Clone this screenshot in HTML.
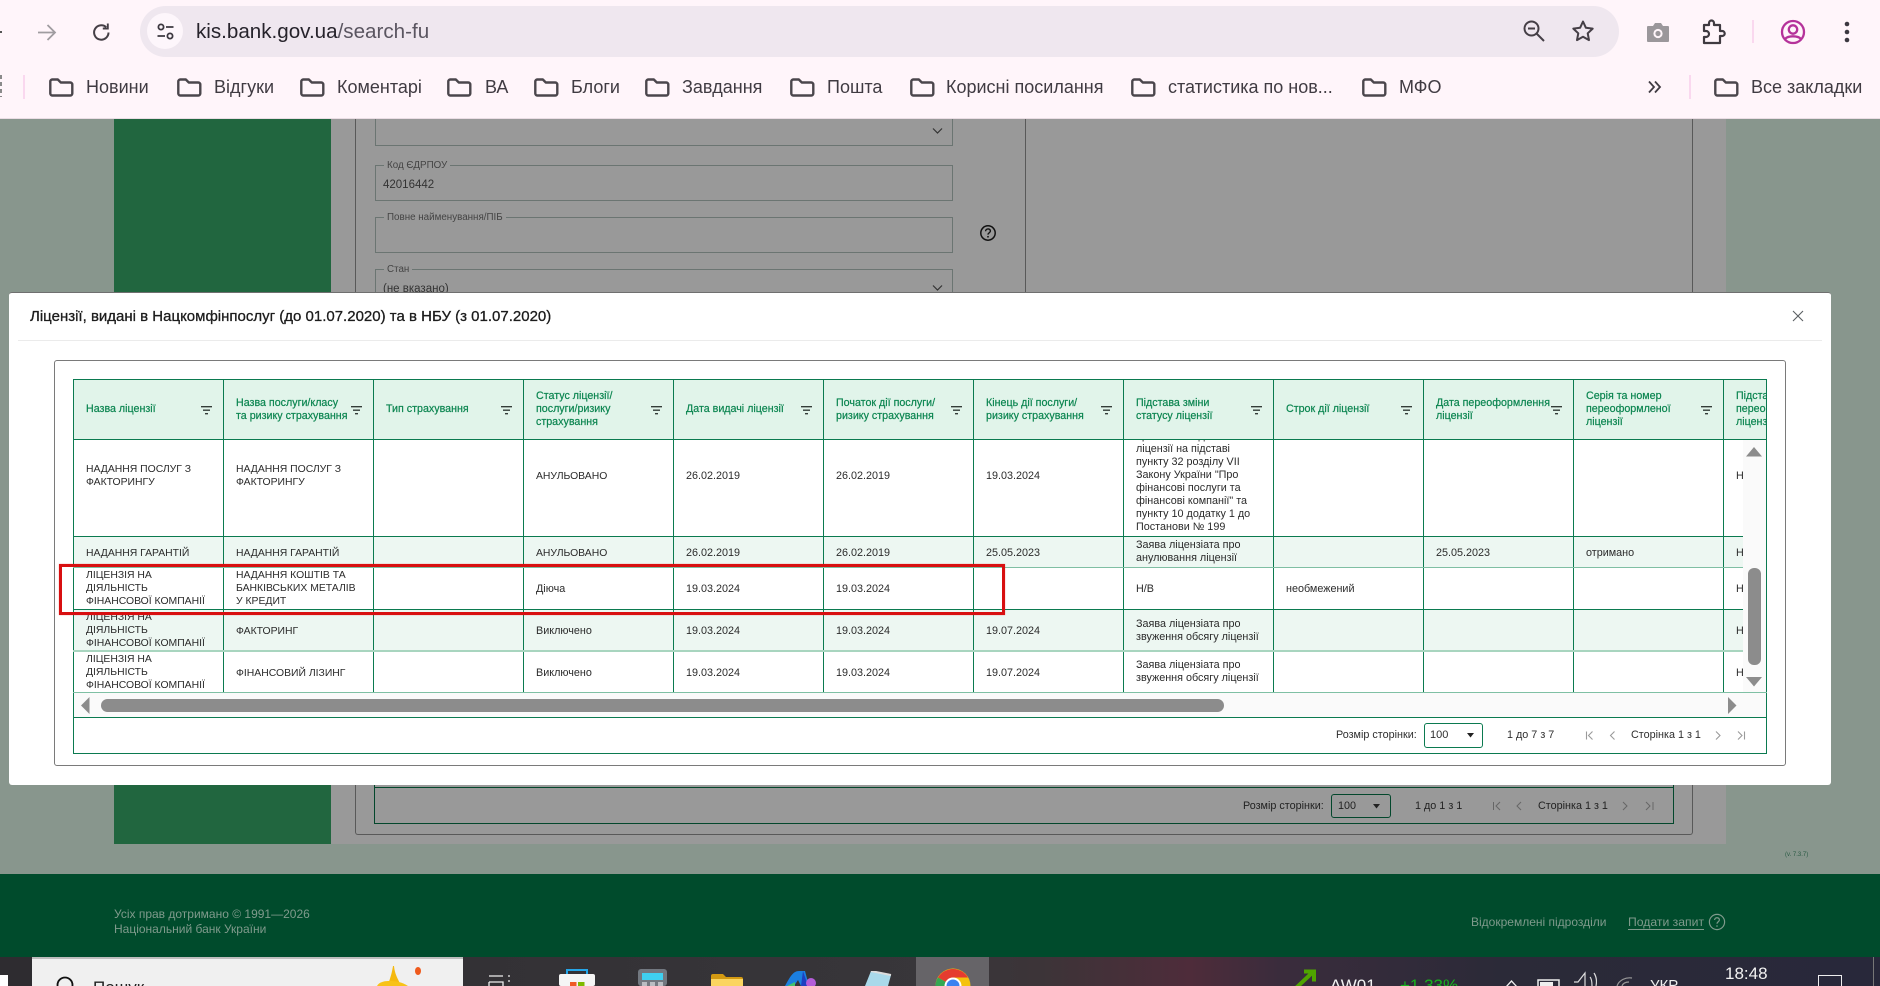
<!DOCTYPE html>
<html lang="uk">
<head>
<meta charset="utf-8">
<title>kis.bank.gov.ua</title>
<style>
html,body{margin:0;padding:0;width:1880px;height:986px;overflow:hidden;background:#88968d}
body{font-family:"Liberation Sans","DejaVu Sans",sans-serif;position:relative}
div,span,svg{position:absolute}
a{color:inherit}
.t{white-space:nowrap}
.bm{white-space:nowrap;font-size:18px;line-height:20px;top:77px;color:#403b42}
.fold{top:77px;width:25px;height:20px}
.layer{left:0;top:0;width:1880px;height:986px}
.c{white-space:nowrap;font-size:10.8px;line-height:13px;color:#2b2b2b}
.k{white-space:nowrap;font-size:10.4px;line-height:13px;color:#2b2b2b}
.h{white-space:nowrap;font-size:10.7px;line-height:13px;color:#0b8550;-webkit-text-stroke:.2px #0b8550}
.v{width:1px;background:#0b7a50}
.hl{height:1px;background:#0b7a50}
.f{width:11px;height:9px;top:406px}
.bg{white-space:nowrap;font-size:10.8px;line-height:13px;color:#2e2e2e}
</style>
</head>
<body>

<!-- page behind overlay -->
<div style="left:0;top:119px;width:1880px;height:755px;background:#88968d"></div>
<div style="left:114px;top:119px;width:217px;height:725px;background:#21663f"></div>
<div style="left:331px;top:119px;width:1395px;height:725px;background:#999"></div>
<div style="left:355px;top:119px;width:1338px;height:716px;border:solid #595959;border-width:0 1px 1px 1px;border-radius:0 0 3px 3px;box-sizing:border-box"></div>
<div style="left:1025px;top:119px;width:1px;height:173px;background:#595959"></div>

<div style="left:375px;top:119px;width:578px;height:27px;border:1px solid #6b7572;border-top:0;box-sizing:border-box"></div>
<svg style="left:932px;top:127px" width="11" height="8" viewBox="0 0 11 8"><path d="M1 1.5l4.5 4.5L10 1.5" fill="none" stroke="#333" stroke-width="1.2"/></svg>

<div style="left:375px;top:165px;width:578px;height:36px;border:1px solid #6b7572;box-sizing:border-box"></div>
<div class="t" style="left:384px;top:160px;padding:0 3px;background:#999;font-size:9.8px;line-height:12px;color:#444">Код ЄДРПОУ</div>
<div class="t" style="left:383px;top:178px;font-size:11.5px;line-height:14px;color:#333">42016442</div>

<div style="left:375px;top:217px;width:578px;height:36px;border:1px solid #6b7572;box-sizing:border-box"></div>
<div class="t" style="left:384px;top:212px;padding:0 3px;background:#999;font-size:9.8px;line-height:12px;color:#444">Повне найменування/ПІБ</div>
<svg style="left:979px;top:224px" width="18" height="18" viewBox="0 0 18 18"><circle cx="9" cy="9" r="7.2" fill="none" stroke="#111" stroke-width="1.5"/><path d="M6.6 7.2c0-3 4.8-3 4.8-.2 0 1.8-2.4 1.8-2.4 3.6" fill="none" stroke="#111" stroke-width="1.4"/><circle cx="9" cy="12.8" r=".9" fill="#111"/></svg>

<div style="left:375px;top:269px;width:578px;height:30px;border:1px solid #6b7572;box-sizing:border-box"></div>
<div class="t" style="left:384px;top:264px;padding:0 3px;background:#999;font-size:9.8px;line-height:12px;color:#444">Стан</div>
<div class="t" style="left:383px;top:282px;font-size:11.5px;line-height:14px;color:#333">(не вказано)</div>
<svg style="left:932px;top:284px" width="11" height="8" viewBox="0 0 11 8"><path d="M1 1.5l4.5 4.5L10 1.5" fill="none" stroke="#333" stroke-width="1.2"/></svg>

<!-- pagination behind modal -->
<div style="left:374px;top:780px;width:1300px;height:44px;border:1px solid #03472c;box-sizing:border-box"></div>
<div class="hl" style="left:374px;top:787px;width:1300px;background:#03472c"></div>
<div class="t" style="left:1243px;top:799px;font-size:10.8px;line-height:14px;color:#222">Розмір сторінки:</div>
<div style="left:1331px;top:794px;width:60px;height:24px;border:1px solid #03472c;border-radius:3px;box-sizing:border-box"></div>
<div class="t" style="left:1338px;top:799px;font-size:10.8px;line-height:14px;color:#222">100</div>
<svg style="left:1373px;top:804px" width="8" height="5"><path d="M0 0h7L3.5 4.5z" fill="#222"/></svg>
<div class="t" style="left:1415px;top:799px;font-size:10.8px;line-height:14px;color:#222">1 до 1 з 1</div>
<svg style="left:1492px;top:800px" width="170" height="12" viewBox="0 0 170 12" fill="none" stroke="#666" stroke-width="1"><path d="M1.5 2v8M8 2L4 6l4 4"/><path d="M29 2l-4 4 4 4"/><path d="M131 2l4 4-4 4"/><path d="M154 2l4 4-4 4M161 2v8"/></svg>
<div class="t" style="left:1538px;top:799px;font-size:10.8px;line-height:14px;color:#222">Сторінка 1 з 1</div>
<div class="t" style="left:1785px;top:851px;font-size:6px;line-height:8px;color:#2a5a44">(v. 7.3.7)</div>

<!-- footer -->
<div style="left:0;top:874px;width:1880px;height:83px;background:#004b2c"></div>
<div class="t" style="left:114px;top:907px;font-size:12px;line-height:14px;color:#7f9a8c">Усіх прав дотримано © 1991—2026</div>
<div class="t" style="left:114px;top:922px;font-size:12px;line-height:14px;color:#7f9a8c">Національний банк України</div>
<div class="t" style="left:1471px;top:915px;font-size:12px;line-height:14px;color:#7f9a8c">Відокремлені підрозділи</div>
<div class="t" style="left:1628px;top:915px;font-size:12.2px;line-height:14px;color:#7f9a8c;border-bottom:1px solid #7f9a8c">Подати запит</div>
<svg style="left:1708px;top:913px" width="18" height="18" viewBox="0 0 18 18"><circle cx="9" cy="9" r="7.6" fill="none" stroke="#7f9a8c" stroke-width="1.2"/><path d="M6.6 7c0-3 4.8-3 4.8-.1 0 1.8-2.4 1.9-2.4 3.8" fill="none" stroke="#7f9a8c" stroke-width="1.2"/><circle cx="9" cy="13" r=".8" fill="#7f9a8c"/></svg>

<!-- chrome -->
<div style="left:0;top:0;width:1880px;height:118px;background:#fff5fa"></div>
<div style="left:0;top:118px;width:1880px;height:1px;background:#eadde4"></div>
<div style="left:0;top:31px;width:2px;height:2px;background:#555"></div>
<svg style="left:36px;top:22px" width="22" height="21" viewBox="0 0 22 21" fill="none" stroke="#a09ca0" stroke-width="1.8"><path d="M2 10.5h17M11.5 3l7.5 7.5-7.5 7.5"/></svg>
<svg style="left:91px;top:22px" width="21" height="21" viewBox="0 0 21 21" fill="none" stroke="#453f46" stroke-width="2"><path d="M17.5 10.5a7.2 7.2 0 1 1-2.3-5.3"/><path d="M16.8 1.5v5h-5" stroke-width="1.9"/></svg>
<div style="left:140px;top:6px;width:1479px;height:51px;border-radius:26px;background:#efe7ef"></div>
<div style="left:147px;top:13px;width:36px;height:36px;border-radius:18px;background:#fdf6fb"></div>
<svg style="left:156px;top:22px" width="19" height="19" viewBox="0 0 19 19" fill="none" stroke="#3c3840" stroke-width="1.8"><circle cx="5" cy="5" r="2.6"/><path d="M10 5h7.5M1.5 14H9"/><circle cx="14" cy="14" r="2.6"/></svg>
<div class="t" style="left:196px;top:20px;font-size:20.6px;line-height:24px;color:#26232b">kis.bank.gov.ua<span style="position:static;color:#5a5560">/search-fu</span></div>
<svg style="left:1522px;top:19px" width="24" height="24" viewBox="0 0 24 24" fill="none" stroke="#453f46" stroke-width="2"><circle cx="9.5" cy="9.5" r="7"/><path d="M6 9.5h7M14.5 14.5L22 22"/></svg>
<svg style="left:1571px;top:19px" width="24" height="24" viewBox="0 0 24 24" fill="none" stroke="#453f46" stroke-width="2" stroke-linejoin="round"><path d="M12 2.5l2.9 6.3 6.8.8-5 4.7 1.3 6.8-6-3.4-6 3.4 1.3-6.8-5-4.7 6.8-.8z"/></svg>
<svg style="left:1646px;top:21px" width="24" height="22" viewBox="0 0 24 22"><path d="M2 5h5l2-3h6l2 3h5a1 1 0 0 1 1 1v14a1 1 0 0 1-1 1H2a1 1 0 0 1-1-1V6a1 1 0 0 1 1-1z" fill="#9b979b"/><circle cx="12" cy="12.5" r="4.6" fill="#fff5fa"/><circle cx="12" cy="12.5" r="2.6" fill="#9b979b"/></svg>
<svg style="left:1701px;top:19px" width="25" height="26" viewBox="0 0 25 26" fill="none" stroke="#3f3a40" stroke-width="2.2" stroke-linejoin="round"><path d="M3 6h5V4a2.5 2.5 0 0 1 5 0v2h6v6h2.200a2.500 2.500 0 0 1 0 5H19v7H3v-6h2a2.800 2.800 0 0 0 0-6H3z"/></svg>
<div style="left:1752px;top:20px;width:2px;height:23px;background:#fad8ef"></div>
<svg style="left:1780px;top:19px" width="26" height="26" viewBox="0 0 26 26" fill="none" stroke="#b5329a" stroke-width="2.300"><circle cx="13" cy="13" r="11"/><circle cx="13" cy="10.500" r="4.200"/><path d="M5 20c3-3.600 13-3.600 16 0"/></svg>
<svg style="left:1843px;top:21px" width="8" height="22" viewBox="0 0 8 22" fill="#3c3840"><circle cx="4" cy="3" r="2.300"/><circle cx="4" cy="11" r="2.300"/><circle cx="4" cy="19" r="2.300"/></svg>

<div style="left:0;top:75px;width:2px;height:22px;background:repeating-linear-gradient(#8a8a8a 0 4px,transparent 4px 7px)"></div>
<div style="left:23px;top:75px;width:2px;height:24px;background:#fad8ef"></div>

<svg style="width:0;height:0"><defs><g id="folder"><path d="M1.300 4.500a2 2 0 0 1 2-2h5.500l3 3h9.500a2 2 0 0 1 2 2v9a2 2 0 0 1-2 2h-18a2 2 0 0 1-2-2z" fill="none" stroke="#4b464c" stroke-width="2.400" stroke-linejoin="round"/></g></defs></svg>
<svg class="fold" style="left:49px" viewBox="0 0 25 20"><use href="#folder"/></svg>
<div class="bm" style="left:86px">Новини</div>
<svg class="fold" style="left:177px" viewBox="0 0 25 20"><use href="#folder"/></svg>
<div class="bm" style="left:214px">Відгуки</div>
<svg class="fold" style="left:300px" viewBox="0 0 25 20"><use href="#folder"/></svg>
<div class="bm" style="left:337px">Коментарі</div>
<svg class="fold" style="left:447px" viewBox="0 0 25 20"><use href="#folder"/></svg>
<div class="bm" style="left:485px">ВА</div>
<svg class="fold" style="left:534px" viewBox="0 0 25 20"><use href="#folder"/></svg>
<div class="bm" style="left:571px">Блоги</div>
<svg class="fold" style="left:645px" viewBox="0 0 25 20"><use href="#folder"/></svg>
<div class="bm" style="left:682px">Завдання</div>
<svg class="fold" style="left:790px" viewBox="0 0 25 20"><use href="#folder"/></svg>
<div class="bm" style="left:827px">Пошта</div>
<svg class="fold" style="left:910px" viewBox="0 0 25 20"><use href="#folder"/></svg>
<div class="bm" style="left:946px">Корисні посилання</div>
<svg class="fold" style="left:1131px" viewBox="0 0 25 20"><use href="#folder"/></svg>
<div class="bm" style="left:1168px">статистика по нов...</div>
<svg class="fold" style="left:1362px" viewBox="0 0 25 20"><use href="#folder"/></svg>
<div class="bm" style="left:1399px">МФО</div>
<svg style="left:1647px;top:80px" width="15" height="14" viewBox="0 0 15 14" fill="none" stroke="#403b42" stroke-width="1.800"><path d="M2 1.500L7 7l-5 5.500M8 1.500L13 7l-5 5.500"/></svg>
<div style="left:1689px;top:75px;width:2px;height:24px;background:#fad8ef"></div>
<svg class="fold" style="left:1714px" viewBox="0 0 25 20"><use href="#folder"/></svg>
<div class="bm" style="left:1751px">Все закладки</div>

<!-- modal -->
<div style="left:9px;top:292px;width:1822px;height:493px;background:#fff;border-top:1px solid #6f6f6f;border-radius:3px;box-sizing:border-box"></div>
<div class="t" style="left:30px;top:308px;font-size:15px;line-height:18px;color:#1c1c1c;-webkit-text-stroke:.3px #1c1c1c">Ліцензії, видані в Нацкомфінпослуг (до 01.07.2020) та в НБУ (з 01.07.2020)</div>
<svg style="left:1792px;top:310px" width="12" height="12" viewBox="0 0 12 12"><path d="M1 1l10 10M11 1L1 11" stroke="#5a5f62" stroke-width="1.100"/></svg>
<div style="left:18px;top:340px;width:1804px;height:1px;background:#ebebeb"></div>
<div style="left:54px;top:360px;width:1732px;height:406px;border:1px solid #7a7a7a;border-radius:3px;box-sizing:border-box;background:#fff"></div>

<!-- table frame and header -->
<div style="left:73px;top:379px;width:1694px;height:60px;background:#e1f4ea"></div>
<div style="left:74px;top:440px;width:1669px;height:252px;background:#fff"></div>
<div style="left:74px;top:537px;width:1669px;height:30px;background:#edf7f2"></div>
<div style="left:74px;top:610px;width:1669px;height:41px;background:#edf7f2"></div>

<div style="left:73px;top:379px;width:1694px;height:375px;border:1px solid #0b7a50;box-sizing:border-box"></div>
<div class="hl" style="left:73px;top:439px;width:1694px"></div>

<div class="v" style="left:223px;top:379px;height:313px"></div>
<div class="v" style="left:373px;top:379px;height:313px"></div>
<div class="v" style="left:523px;top:379px;height:313px"></div>
<div class="v" style="left:673px;top:379px;height:313px"></div>
<div class="v" style="left:823px;top:379px;height:313px"></div>
<div class="v" style="left:973px;top:379px;height:313px"></div>
<div class="v" style="left:1123px;top:379px;height:313px"></div>
<div class="v" style="left:1273px;top:379px;height:313px"></div>
<div class="v" style="left:1423px;top:379px;height:313px"></div>
<div class="v" style="left:1573px;top:379px;height:313px"></div>
<div class="v" style="left:1723px;top:379px;height:313px"></div>

<div class="hl" style="left:73px;top:536px;width:1670px"></div>
<div class="hl" style="left:73px;top:567px;width:1670px;background:#7fbfa3"></div>
<div class="hl" style="left:73px;top:609px;width:1670px"></div>
<div style="left:73px;top:650px;width:1670px;height:2px;background:#a8d5bf"></div>
<div class="hl" style="left:73px;top:692px;width:1694px;background:#7fc0a4"></div>
<div class="hl" style="left:73px;top:717px;width:1694px"></div>

<!-- header text -->
<div class="layer" style="clip-path:polygon(74px 380px,1766px 380px,1766px 439px,74px 439px)">
<div class="h" style="left:86px;top:403px">Назва ліцензії</div>
<div class="h" style="left:236px;top:397px">Назва послуги/класу<br>та ризику страхування</div>
<div class="h" style="left:386px;top:403px">Тип страхування</div>
<div class="h" style="left:536px;top:390px">Статус ліцензії/<br>послуги/ризику<br>страхування</div>
<div class="h" style="left:686px;top:403px">Дата видачі ліцензії</div>
<div class="h" style="left:836px;top:397px">Початок дії послуги/<br>ризику страхування</div>
<div class="h" style="left:986px;top:397px">Кінець дії послуги/<br>ризику страхування</div>
<div class="h" style="left:1136px;top:397px">Підстава зміни<br>статусу ліцензії</div>
<div class="h" style="left:1286px;top:403px">Строк дії ліцензії</div>
<div class="h" style="left:1436px;top:397px">Дата переоформлення<br>ліцензії</div>
<div class="h" style="left:1586px;top:390px">Серія та номер<br>переоформленої<br>ліцензії</div>
<div class="h" style="left:1736px;top:390px">Підстава<br>переоформлення<br>ліцензії</div>
</div>

<svg style="width:0;height:0"><defs><g id="flt"><path d="M0 .7h11M2 4.200h7M4 7.700h3" stroke="#333c38" stroke-width="1.300" fill="none"/></g></defs></svg>
<svg class="f" style="left:201px" viewBox="0 0 11 9"><use href="#flt"/></svg>
<svg class="f" style="left:351px" viewBox="0 0 11 9"><use href="#flt"/></svg>
<svg class="f" style="left:501px" viewBox="0 0 11 9"><use href="#flt"/></svg>
<svg class="f" style="left:651px" viewBox="0 0 11 9"><use href="#flt"/></svg>
<svg class="f" style="left:801px" viewBox="0 0 11 9"><use href="#flt"/></svg>
<svg class="f" style="left:951px" viewBox="0 0 11 9"><use href="#flt"/></svg>
<svg class="f" style="left:1101px" viewBox="0 0 11 9"><use href="#flt"/></svg>
<svg class="f" style="left:1251px" viewBox="0 0 11 9"><use href="#flt"/></svg>
<svg class="f" style="left:1401px" viewBox="0 0 11 9"><use href="#flt"/></svg>
<svg class="f" style="left:1551px" viewBox="0 0 11 9"><use href="#flt"/></svg>
<svg class="f" style="left:1701px" viewBox="0 0 11 9"><use href="#flt"/></svg>

<!-- body text -->
<div class="layer" style="clip-path:polygon(74px 440px,1743px 440px,1743px 692px,74px 692px)">
<!-- row 1 -->
<div class="k" style="left:86px;top:463px">НАДАННЯ ПОСЛУГ З<br>ФАКТОРИНГУ</div>
<div class="k" style="left:236px;top:463px">НАДАННЯ ПОСЛУГ З<br>ФАКТОРИНГУ</div>
<div class="k" style="left:536px;top:470px">АНУЛЬОВАНО</div>
<div class="c" style="left:686px;top:470px">26.02.2019</div>
<div class="c" style="left:836px;top:470px">26.02.2019</div>
<div class="c" style="left:986px;top:470px">19.03.2024</div>
<div class="c" style="left:1136px;top:430px">припинення дії<br>ліцензії на підставі<br>пункту 32 розділу VII<br>Закону України "Про<br>фінансові послуги та<br>фінансові компанії" та<br>пункту 10 додатку 1 до<br>Постанови № 199</div>
<div class="c" style="left:1736px;top:470px">Н/В</div>
<!-- row 2 -->
<div class="k" style="left:86px;top:547px">НАДАННЯ ГАРАНТІЙ</div>
<div class="k" style="left:236px;top:547px">НАДАННЯ ГАРАНТІЙ</div>
<div class="k" style="left:536px;top:547px">АНУЛЬОВАНО</div>
<div class="c" style="left:686px;top:547px">26.02.2019</div>
<div class="c" style="left:836px;top:547px">26.02.2019</div>
<div class="c" style="left:986px;top:547px">25.05.2023</div>
<div class="c" style="left:1136px;top:539px">Заява ліцензіата про<br>анулювання ліцензії</div>
<div class="c" style="left:1436px;top:547px">25.05.2023</div>
<div class="c" style="left:1586px;top:547px">отримано</div>
<div class="c" style="left:1736px;top:547px">Н/В</div>
<!-- row 3 -->
<div class="k" style="left:86px;top:569px">ЛІЦЕНЗІЯ НА<br>ДІЯЛЬНІСТЬ<br>ФІНАНСОВОЇ КОМПАНІЇ</div>
<div class="k" style="left:236px;top:569px">НАДАННЯ КОШТІВ ТА<br>БАНКІВСЬКИХ МЕТАЛІВ<br>У КРЕДИТ</div>
<div class="c" style="left:536px;top:583px">Діюча</div>
<div class="c" style="left:686px;top:583px">19.03.2024</div>
<div class="c" style="left:836px;top:583px">19.03.2024</div>
<div class="c" style="left:1136px;top:583px">Н/В</div>
<div class="c" style="left:1286px;top:583px">необмежений</div>
<div class="c" style="left:1736px;top:583px">Н/В</div>
<!-- row 4 -->
<div class="k" style="left:86px;top:611px">ЛІЦЕНЗІЯ НА<br>ДІЯЛЬНІСТЬ<br>ФІНАНСОВОЇ КОМПАНІЇ</div>
<div class="k" style="left:236px;top:625px">ФАКТОРИНГ</div>
<div class="c" style="left:536px;top:625px">Виключено</div>
<div class="c" style="left:686px;top:625px">19.03.2024</div>
<div class="c" style="left:836px;top:625px">19.03.2024</div>
<div class="c" style="left:986px;top:625px">19.07.2024</div>
<div class="c" style="left:1136px;top:618px">Заява ліцензіата про<br>звуження обсягу ліцензії</div>
<div class="c" style="left:1736px;top:625px">Н/В</div>
<!-- row 5 -->
<div class="k" style="left:86px;top:653px">ЛІЦЕНЗІЯ НА<br>ДІЯЛЬНІСТЬ<br>ФІНАНСОВОЇ КОМПАНІЇ</div>
<div class="k" style="left:236px;top:667px">ФІНАНСОВИЙ ЛІЗИНГ</div>
<div class="c" style="left:536px;top:667px">Виключено</div>
<div class="c" style="left:686px;top:667px">19.03.2024</div>
<div class="c" style="left:836px;top:667px">19.03.2024</div>
<div class="c" style="left:986px;top:667px">19.07.2024</div>
<div class="c" style="left:1136px;top:659px">Заява ліцензіата про<br>звуження обсягу ліцензії</div>
<div class="c" style="left:1736px;top:667px">Н/В</div>
</div>

<!-- scrollbars -->
<div style="left:1743px;top:440px;width:23px;height:252px;background:#fafafa"></div>
<svg style="left:1746px;top:447px" width="16" height="10"><path d="M0 9.500L8 0l8 9.500z" fill="#8c8c8c"/></svg>
<div style="left:1748px;top:568px;width:13px;height:97px;border-radius:6px;background:#8c8c8c"></div>
<svg style="left:1746px;top:677px" width="16" height="10"><path d="M0 0h16L8 9.500z" fill="#8c8c8c"/></svg>
<div style="left:74px;top:693px;width:1692px;height:24px;background:#fafafa"></div>
<svg style="left:81px;top:697px" width="9" height="17"><path d="M8.500 0v17L0 8.500z" fill="#8c8c8c"/></svg>
<div style="left:101px;top:699px;width:1123px;height:13px;border-radius:7px;background:#8c8c8c"></div>
<svg style="left:1728px;top:697px" width="9" height="17"><path d="M0 0v17l8.500-8.500z" fill="#8c8c8c"/></svg>

<!-- pagination -->
<div class="bg" style="left:1336px;top:729px">Розмір сторінки:</div>
<div style="left:1424px;top:723px;width:59px;height:25px;border:1px solid #0b7a50;border-radius:3px;box-sizing:border-box;background:#fff"></div>
<div class="bg" style="left:1430px;top:729px;font-size:11px">100</div>
<svg style="left:1467px;top:733px" width="7" height="5"><path d="M0 0h7L3.500 4.500z" fill="#222"/></svg>
<div class="bg" style="left:1507px;top:729px">1 до 7 з 7</div>
<svg style="left:1585px;top:730px" width="165" height="11" viewBox="0 0 165 11" fill="none" stroke="#9a9a9a" stroke-width="1.100"><path d="M1.500 1.500v8M7.500 1.500L3.500 5.500l4 4"/><path d="M29.500 1.500l-4 4 4 4"/><path d="M131 1.500l4 4-4 4"/><path d="M153 1.500l4 4-4 4M159.500 1.500v8"/></svg>
<div class="bg" style="left:1631px;top:729px">Сторінка 1 з 1</div>

<!-- red highlight -->
<div style="left:59px;top:564px;width:946px;height:51px;border:3px solid #d80f10;box-sizing:border-box;box-shadow:0 0 1px rgba(216,15,16,.5)"></div>

<!-- taskbar -->
<div style="left:0;top:957px;width:1880px;height:29px;background:linear-gradient(90deg,#2e2c30 0,#38363a 960px,#3c3438 1040px,#4e2c3a 1190px,#3a2c3c 1280px,#2b2a38 1500px,#28283a 1880px)"></div>
<div style="left:0;top:975px;width:8px;height:11px;background:#fff"></div>
<div style="left:32px;top:957px;width:431px;height:29px;background:#f0f0f0;border-top:2px solid #bdbdbd;box-sizing:border-box"></div>
<svg style="left:56px;top:974px" width="20" height="12" fill="none" stroke="#111" stroke-width="1.800"><circle cx="9" cy="11" r="7.500"/></svg>
<div class="t" style="left:93px;top:978px;font-size:17px;line-height:20px;color:#222">Пошук</div>
<svg style="left:372px;top:965px" width="50" height="21" viewBox="0 0 50 21"><path d="M16 21c1-6 3-8 5-20h1c1 10 5 14 7 20z" fill="#f5b90f"/><path d="M5 21c2-4 8-5 11-5 8 0 14 1 20 5z" fill="#f8c218"/><ellipse cx="46" cy="6" rx="3" ry="4" fill="#ef5a1c"/></svg>

<svg style="left:488px;top:975px" width="25" height="11" fill="none" stroke="#eee" stroke-width="1.300"><path d="M1 1h14M1 7h14v4M1 7v4M20 1h2M20 6h2"/></svg>
<svg style="left:559px;top:968px" width="36" height="18"><path d="M8 6V2h20v4" fill="none" stroke="#26a6e8" stroke-width="2"/><rect x="0" y="6" width="36" height="12" rx="2" fill="#f5f5f5"/><rect x="11" y="14" width="6.500" height="4" fill="#ef5a26"/><rect x="19" y="14" width="6.500" height="4" fill="#7fba00"/></svg>
<svg style="left:638px;top:969px" width="29" height="17"><rect width="29" height="17" rx="3" fill="#727880"/><rect x="4" y="4" width="21" height="7" fill="#3fd0f0"/><rect x="4" y="13" width="5" height="4" fill="#b9bdc2"/><rect x="12" y="13" width="5" height="4" fill="#b9bdc2"/><rect x="20" y="13" width="5" height="4" fill="#b9bdc2"/></svg>
<svg style="left:711px;top:974px" width="32" height="12"><path d="M0 2a2 2 0 0 1 2-2h10l3 3h15a2 2 0 0 1 2 2v7H0z" fill="#d49a12"/><rect y="5" width="32" height="7" fill="#fbd561"/></svg>
<svg style="left:785px;top:971px" width="31" height="15"><path d="M0 15C5 6 8 0 14 0h6l4 15h-8l-3-6-4 6z" fill="#1b7fe0"/><path d="M18 0l5 15h-7z" fill="#1e3fc0"/><circle cx="26" cy="12" r="5" fill="#b45cd8"/><path d="M2 15l8-4v4z" fill="#44c26a"/></svg>
<svg style="left:863px;top:971px" width="29" height="15"><path d="M8 0l20 4-3 11H2z" fill="#a9d9ea"/><path d="M8 0l20 4" stroke="#ddd" stroke-width="2"/></svg>
<div style="left:916px;top:957px;width:73px;height:29px;background:#666468"></div>
<svg style="left:935px;top:968px" width="36" height="18" viewBox="0 0 36 18"><circle cx="18" cy="18" r="17.500" fill="#f4c20d"/><path d="M18 18L3 9.500A17.500 17.500 0 0 1 33 9.500H18z" fill="#e53b30"/><path d="M18 18L3 9.500A17.500 17.500 0 0 0 .5 18z" fill="#34a853"/><circle cx="18" cy="18" r="8.500" fill="#fff"/><circle cx="18" cy="18" r="6.500" fill="#3b82f0"/></svg>

<svg style="left:1294px;top:969px" width="24" height="17" fill="none" stroke="#4fa400" stroke-width="4"><path d="M2 19L19 3M10 2.500h10v10"/></svg>
<div class="t" style="left:1330px;top:976px;font-size:17px;line-height:20px;color:#f2f2f2">AW01</div>
<div class="t" style="left:1400px;top:976px;font-size:17px;line-height:20px;color:#17b31c">+1.33%</div>
<svg style="left:1505px;top:980px" width="13" height="6" fill="none" stroke="#eee" stroke-width="1.300"><path d="M1 7l5.500-6L12 7"/></svg>
<svg style="left:1537px;top:979px" width="23" height="7"><rect x="1" y="1" width="21" height="8" fill="none" stroke="#eee" stroke-width="1.500"/><rect x="3" y="3" width="13" height="4" fill="#eee"/></svg>
<svg style="left:1573px;top:971px" width="24" height="15" fill="none" stroke="#ddd" stroke-width="1.200"><path d="M1 11h4l7-9v13M17 6c2 2 2 6 2 9M21 2c2 3 3 8 2 13"/></svg>
<svg style="left:1616px;top:977px" width="18" height="9" fill="none" stroke="#999" stroke-width="1.200"><path d="M1 9C3 3 10 0 16 1M6 9c1-3 4-4 7-4"/></svg>
<div class="t" style="left:1650px;top:976px;font-size:15px;line-height:20px;color:#eee">УКР</div>
<div class="t" style="left:1725px;top:964px;font-size:17px;line-height:20px;color:#f2f2f2">18:48</div>
<div style="left:1818px;top:975px;width:24px;height:11px;border:1px solid #eee;border-bottom:0;box-sizing:border-box"></div>
<div style="left:1873px;top:957px;width:1px;height:29px;background:#777"></div>

</body>
</html>
